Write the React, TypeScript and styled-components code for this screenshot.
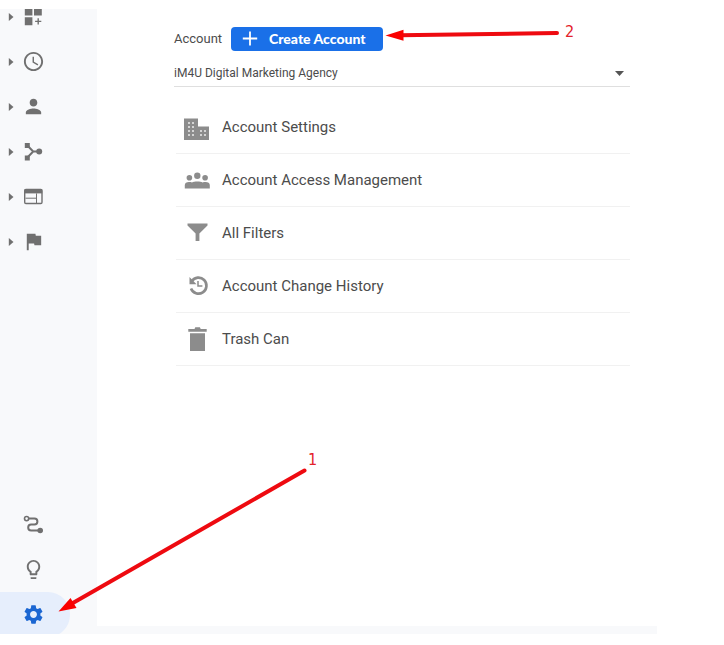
import React from "react";
import styled, { createGlobalStyle } from "styled-components";
import {
  MdAccessTime,
  MdFlag,
  MdLightbulbOutline,
  MdPerson,
  MdSettings,
} from "react-icons/md";

const GlobalStyle = createGlobalStyle`
  * { box-sizing: border-box; }
  body {
    margin: 0;
    background: #fff;
    font-family: Roboto, "Liberation Sans", sans-serif;
    color: #4c4c4c;
  }
`;

const Page = styled.div`
  position: relative;
  display: flex;
  min-height: 100vh;
  padding: 9px 67px 11px 0;
`;

const Sidebar = styled.nav`
  display: flex;
  flex-direction: column;
  justify-content: space-between;
  width: 97px;
  flex-shrink: 0;
  overflow: hidden;
  background: #f8f9fb;
`;

const NavGroup = styled.ul<{ $edge: "top" | "bottom" }>`
  list-style: none;
  padding: 0;
  margin: ${(p) => (p.$edge === "top" ? "-15px 0 0" : "0 0 -3px")};
`;

const NavButton = styled.button<{ $active?: boolean }>`
  display: flex;
  align-items: center;
  gap: 8px;
  width: 70px;
  height: 45px;
  padding: 0 0 0 8px;
  border: 0;
  border-radius: 0 22px 22px 0;
  background: ${(p) => (p.$active ? "#e6eefc" : "transparent")};
  color: ${(p) => (p.$active ? "#1b66d2" : "#707070")};
  cursor: pointer;
`;

const ExpandSlot = styled.span`
  display: flex;
  width: 6px;
`;

const Content = styled.main`
  flex: 1;
  min-width: 0;
  padding: 18px 27px 8px 77px;
  border-bottom: 8px solid #f8f9fb;
`;

const AccountBar = styled.div`
  display: flex;
  align-items: center;
  gap: 12px;
`;

const AccountLabel = styled.label`
  width: 45px;
  font-size: 13px;
  line-height: 24px;
`;

const CreateButton = styled.button`
  display: flex;
  align-items: center;
  gap: 11px;
  width: 152px;
  height: 24px;
  padding: 0 0 0 11px;
  border: 0;
  border-radius: 4px;
  background: #1a70e8;
  color: #fff;
  font: 900 14px/20px Lato, sans-serif;
  white-space: nowrap;
  cursor: pointer;
`;

const SelectWrap = styled.div`
  position: relative;
  margin-top: 9px;
  border-bottom: 1px solid #dfdfdf;
`;

const AccountSelect = styled.select`
  display: block;
  width: 100%;
  height: 26px;
  padding: 0;
  border: 0;
  appearance: none;
  background: transparent;
  color: #4c4c4c;
  font: 400 12px/26px Roboto, sans-serif;
`;

const SelectCaret = styled.svg`
  position: absolute;
  right: 6px;
  top: 11px;
  pointer-events: none;
`;

const Settings = styled.ul`
  list-style: none;
  margin: 14px 0 0 2px;
  padding: 0;
`;

const SettingsItem = styled.li`
  border-bottom: 1px solid #f1f1f1;
`;

const SettingsLink = styled.a`
  display: flex;
  align-items: center;
  gap: 11px;
  height: 52px;
  padding-left: 7px;
  color: #4c4c4c;
  font-size: 15px;
  line-height: 20px;
  text-decoration: none;

  svg {
    flex-shrink: 0;
    color: #8c8c8c;
  }
`;

const Annotations = styled.svg`
  position: absolute;
  left: 0;
  top: 0;
  pointer-events: none;
`;

const NavSvg = ({ children }: { children: React.ReactNode }) => (
  <svg width="23" height="23" viewBox="0 0 23 23" fill="currentColor" aria-hidden="true">
    {children}
  </svg>
);

const DashboardIcon = () => (
  <NavSvg>
    <path d="M2.800 2.500h7.600V10.500H2.800zM12 2.500h7.800v8H12zM2.800 12.300h7.600v8H2.800z" />
    <path d="M16.200 13.300v6.200M13.100 16.400h6.200" stroke="currentColor" strokeWidth="1.400" />
  </NavSvg>
);

const BranchIcon = () => (
  <NavSvg>
    <path d="M2.800 3h5v5h-5zM2.800 15.500h5v5h-5z" />
    <path d="M5.400 5.500l5.800 6-5.800 6M11.200 11.500H17" fill="none" stroke="currentColor" strokeWidth="2" />
    <circle cx="17.200" cy="11.600" r="3" />
  </NavSvg>
);

const WebIcon = () => (
  <NavSvg>
    <rect x="2.700" y="4.500" width="17.300" height="14" rx="1.200" fill="none" stroke="currentColor" strokeWidth="1.400" />
    <path d="M2.500 4.400h17.700v4H2.500z" />
    <path d="M3.500 13.200h11M14.500 8.400V18" fill="none" stroke="currentColor" strokeWidth="1" />
  </NavSvg>
);

const RouteIcon = () => (
  <NavSvg>
    <circle cx="4.600" cy="5.600" r="2.100" fill="none" stroke="currentColor" strokeWidth="1.600" />
    <path
      d="M6.600 5.600h5.800a3 3 0 0 1 0 6h-3.300a2.900 2.900 0 0 0 0 5.800H18"
      fill="none"
      stroke="currentColor"
      strokeWidth="2"
    />
    <circle cx="18.200" cy="17.500" r="2.800" />
  </NavSvg>
);

const RowSvg = ({ children }: { children: React.ReactNode }) => (
  <svg width="28" height="28" viewBox="0 0 28 28" fill="currentColor" aria-hidden="true">
    {children}
  </svg>
);

const BuildingIcon = () => (
  <RowSvg>
    <path d="M1 5.500h14v8h11V27H1z" />
    <path
      d="M5 9h2v2H5zM9 9h2v2H9zM5 13h2v2H5zM9 13h2v2H9zM5 17h2v2H5zM9 17h2v2H9zM5 21h2v2H5zM9 21h2v2H9zM17 17h2v2h-2zM21 17h2v2h-2zM17 21h2v2h-2zM21 21h2v2h-2z"
      fill="#d4d4d4"
    />
  </RowSvg>
);

const PeopleIcon = () => (
  <RowSvg>
    <circle cx="14.300" cy="9.800" r="3.200" />
    <circle cx="6.400" cy="11.700" r="2.800" />
    <circle cx="22.100" cy="11.700" r="2.800" />
    <path d="M1.800 22.600V19c0-2 1.700-3 4.200-3 1.200 0 2.200.1 3 .4 1.200-.6 3-1 5.300-1s4.100.4 5.300 1c.8-.3 1.800-.4 3-.4 2.500 0 4.200 1 4.200 3v3.600z" />
  </RowSvg>
);

const FilterIcon = () => (
  <RowSvg>
    <path d="M4.500 4.500h20v2L16.400 14.500v7.500h-3.800v-7.500L4.500 6.500z" />
  </RowSvg>
);

const HistoryIcon = () => (
  <RowSvg>
    <path d="M8.800 9.200a8 8 0 1 1-.8 7.300" fill="none" stroke="currentColor" strokeWidth="2.600" />
    <path d="M6.500 5v7.300h7z" />
    <path d="M15 9v5h4.400" fill="none" stroke="currentColor" strokeWidth="1.500" />
  </RowSvg>
);

const TrashIcon = () => (
  <RowSvg>
    <path d="M5.300 4h6.200l.8-1.700h4.600l.8 1.700h6v2.800H5.300zM7 8.300h15V26H7z" />
  </RowSvg>
);

const PlusIcon = () => (
  <svg width="16" height="16" viewBox="0 0 16 16" aria-hidden="true">
    <path d="M8 .5v14M.8 7.500h14.400" stroke="#fff" strokeWidth="1.800" />
  </svg>
);

const reportLinks = [
  { label: "Customization", icon: <DashboardIcon /> },
  { label: "Realtime", icon: <MdAccessTime size={23} /> },
  { label: "Audience", icon: <MdPerson size={23} /> },
  { label: "Acquisition", icon: <BranchIcon /> },
  { label: "Behavior", icon: <WebIcon /> },
  { label: "Conversions", icon: <MdFlag size={23} /> },
];

const toolLinks = [
  { label: "Attribution", icon: <RouteIcon /> },
  { label: "Discover", icon: <MdLightbulbOutline size={23} /> },
  { label: "Admin", icon: <MdSettings size={23} />, active: true },
];

const settings = [
  { label: "Account Settings", icon: <BuildingIcon /> },
  { label: "Account Access Management", icon: <PeopleIcon /> },
  { label: "All Filters", icon: <FilterIcon /> },
  { label: "Account Change History", icon: <HistoryIcon /> },
  { label: "Trash Can", icon: <TrashIcon /> },
];

export default function App() {
  return (
    <>
      <GlobalStyle />
      <Page>
        <Sidebar>
          <NavGroup $edge="top">
            {reportLinks.map((item) => (
              <li key={item.label}>
                <NavButton aria-label={item.label} aria-expanded={false}>
                  <ExpandSlot>
                    <svg width="6" height="8" viewBox="0 0 6 8" aria-hidden="true">
                      <path d="M.8 0L5.500 4 .8 8z" fill="currentColor" />
                    </svg>
                  </ExpandSlot>
                  {item.icon}
                </NavButton>
              </li>
            ))}
          </NavGroup>
          <NavGroup $edge="bottom">
            {toolLinks.map((item) => (
              <li key={item.label}>
                <NavButton aria-label={item.label} $active={item.active}>
                  <ExpandSlot />
                  {item.icon}
                </NavButton>
              </li>
            ))}
          </NavGroup>
        </Sidebar>
        <Content>
          <AccountBar>
            <AccountLabel htmlFor="account">Account</AccountLabel>
            <CreateButton>
              <PlusIcon />
              Create Account
            </CreateButton>
          </AccountBar>
          <SelectWrap>
            <AccountSelect id="account">
              <option>iM4U Digital Marketing Agency</option>
            </AccountSelect>
            <SelectCaret width="9" height="5" viewBox="0 0 9 5" aria-hidden="true">
              <path d="M0 0h9L4.500 5z" fill="#555" />
            </SelectCaret>
          </SelectWrap>
          <Settings>
            {settings.map((item) => (
              <SettingsItem key={item.label}>
                <SettingsLink href="#">
                  {item.icon}
                  {item.label}
                </SettingsLink>
              </SettingsItem>
            ))}
          </Settings>
        </Content>
        <Annotations width="600" height="630" viewBox="0 0 600 630">
          <g stroke="#ee0a10" strokeWidth="4" strokeLinecap="round">
            <path d="M304.500 470.500L72 603.500" />
            <path d="M557 33L400 35.300" />
          </g>
          <g fill="#fa0000">
            <path d="M58.500 611.500L70.500 598 76.500 608z" />
            <path d="M385.500 35.500L403.500 29.800V40.800z" />
          </g>
          <g fill="#e3222b" fontFamily='"DejaVu Sans Condensed", "DejaVu Sans", sans-serif' fontSize="16">
            <text x="308" y="465">1</text>
            <text x="565" y="37">2</text>
          </g>
        </Annotations>
      </Page>
    </>
  );
}
